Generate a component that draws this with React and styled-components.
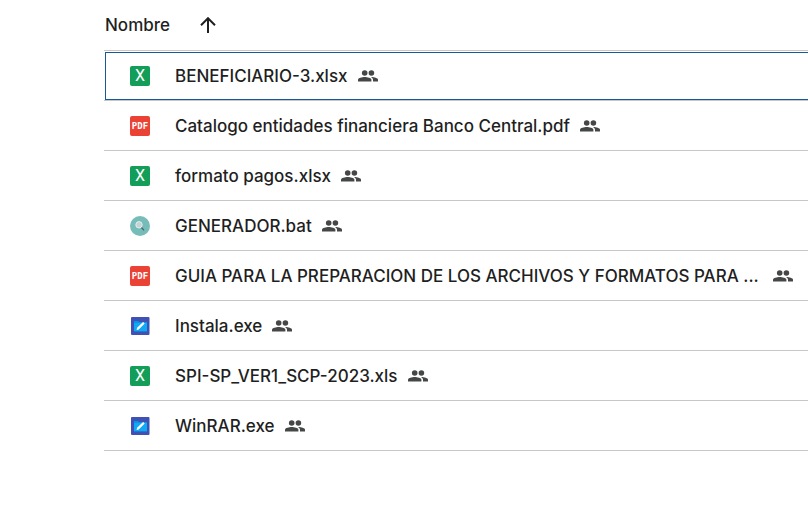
import React from "react";
import styled, { createGlobalStyle, css } from "styled-components";

const files = [
  { name: "BENEFICIARIO-3.xlsx", type: "sheet", selected: true },
  { name: "Catalogo entidades financiera Banco Central.pdf", type: "pdf" },
  { name: "formato pagos.xlsx", type: "sheet" },
  { name: "GENERADOR.bat", type: "script" },
  {
    name: "GUIA PARA LA PREPARACION DE LOS ARCHIVOS Y FORMATOS PARA ...",
    type: "pdf",
    shortened: true
  },
  { name: "Instala.exe", type: "program" },
  { name: "SPI-SP_VER1_SCP-2023.xls", type: "sheet" },
  { name: "WinRAR.exe", type: "program" }
];

/**
 * Icons
 */
const SheetIcon = () => <SheetBadge aria-hidden="true">X</SheetBadge>;

const PdfIcon = () => <PdfBadge aria-hidden="true">PDF</PdfBadge>;

const ScriptIcon = () => (
  <Icon viewBox="0 0 20 20" aria-hidden="true">
    <circle cx="10" cy="10" r="10" fill="#76bdb9" />
    <path d="m11 11 3 3.400" stroke="#4c5d6d" strokeWidth="1.2" />
    <circle cx="9" cy="8.800" r="3.2" fill="#c3d3d6" stroke="#e4eeed" />
  </Icon>
);

const ProgramIcon = () => (
  <Icon viewBox="0 0 20 20" aria-hidden="true">
    <rect x="1" y="1" width="18.500" height="18" rx="1" fill="#3f51b5" />
    <path d="M4 5h4l1 1h8v9.300H4z" fill="#0a94e8" />
    <path d="M4 7h13v8.300H4z" fill="#10a9f4" />
    <path d="m6.600 14 .5-2.200 6-5.800 1.600 1.600-6 5.800z" fill="#fff" />
  </Icon>
);

const SharedIcon = () => (
  <People viewBox="0 0 20 12" role="img" aria-label="Compartido">
    <circle cx="6.7" cy="3" r="2.8" />
    <circle cx="13.4" cy="3" r="2.8" />
    <path d="M0 11.500V9.700C0 7.900 4.200 7 6.700 7s6.700.9 6.700 2.700v1.800z" />
    <path d="M12.800 7C16 6.900 20 8 20 9.700v1.800h-5V9.700c0-1.100-.8-2-2.200-2.700z" />
  </People>
);

const icons = {
  sheet: SheetIcon,
  pdf: PdfIcon,
  script: ScriptIcon,
  program: ProgramIcon
};

const FileRow = ({ name, type, selected, shortened }) => {
  const TypeIcon = icons[type];

  return (
    <Row $selected={selected} aria-selected={!!selected}>
      <Cell>
        <FileInfo>
          <TypeIcon />
          <FileName $shortened={shortened}>{name}</FileName>
          <SharedIcon />
        </FileInfo>
      </Cell>
    </Row>
  );
};

const App = () => (
  <Page>
    <GlobalStyle />
    <FileTable>
      <thead>
        <tr>
          <HeaderCell scope="col" aria-sort="ascending">
            <SortButton type="button">
              Nombre
              <Arrow viewBox="0 0 16 16" aria-hidden="true">
                <path d="M8 16V1.500M1 8.200 8 1.200l7 7" />
              </Arrow>
            </SortButton>
          </HeaderCell>
        </tr>
      </thead>
      <tbody>
        {files.map(file => (
          <FileRow key={file.name} {...file} />
        ))}
      </tbody>
    </FileTable>
  </Page>
);

const GlobalStyle = createGlobalStyle`
  body {
    margin: 0;
    background: #fff;
    color: #1f1f1f;
    font-family: Inter, Roboto, "Liberation Sans", sans-serif;
    font-size: 17px;
    font-weight: 450;
  }
`;

const Page = styled.main`
  padding-left: 104px;
  overflow: hidden;
`;

const FileTable = styled.table`
  width: calc(100% + 16px);
  border-collapse: separate;
  border-spacing: 0;
`;

const HeaderCell = styled.th`
  box-sizing: border-box;
  height: 51px;
  padding: 0 0 1px 1px;
  border-bottom: 1px solid #c7c7c7;
  font-weight: inherit;
  text-align: left;
`;

const SortButton = styled.button`
  display: flex;
  align-items: center;
  gap: 30px;
  padding: 0;
  border: 0;
  background: none;
  color: inherit;
  font: inherit;
  line-height: 24px;
  cursor: pointer;
`;

const Row = styled.tr`
  outline: ${props => (props.$selected ? "1px solid #1a5796" : "none")};
  outline-offset: -2px;
`;

const Cell = styled.td`
  box-sizing: border-box;
  height: 50px;
  padding: 0 31px 0 26px;
  border-bottom: 1px solid #c7c7c7;
`;

const FileInfo = styled.div`
  display: flex;
  align-items: center;
`;

const FileName = styled.span`
  flex: ${props => (props.$shortened ? "1 1 auto" : "none")};
  margin: 0 10px 0 25px;
  line-height: 24px;
  white-space: nowrap;
`;

const Icon = styled.svg`
  flex: none;
  width: 20px;
  height: 20px;
`;

const SharedBadgeCss = css`
  flex: none;
  width: 20px;
  height: 20px;
  border-radius: 2px;
  color: #fff;
  line-height: 20px;
  text-align: center;
`;

const SheetBadge = styled.span`
  ${SharedBadgeCss}
  background: #129d58;
  font-family: Roboto, sans-serif;
  font-size: 16px;
  font-weight: 400;
`;

const PdfBadge = styled.span`
  ${SharedBadgeCss}
  background: #ea4335;
  font-family: "DejaVu Sans Mono", monospace;
  font-size: 9px;
  font-weight: 700;
`;

const People = styled.svg`
  flex: none;
  width: 20px;
  height: 12px;
  fill: #444746;
`;

const Arrow = styled.svg`
  width: 16px;
  height: 16px;
  fill: none;
  stroke: #1f1f1f;
  stroke-width: 2;
`;

export default App;
